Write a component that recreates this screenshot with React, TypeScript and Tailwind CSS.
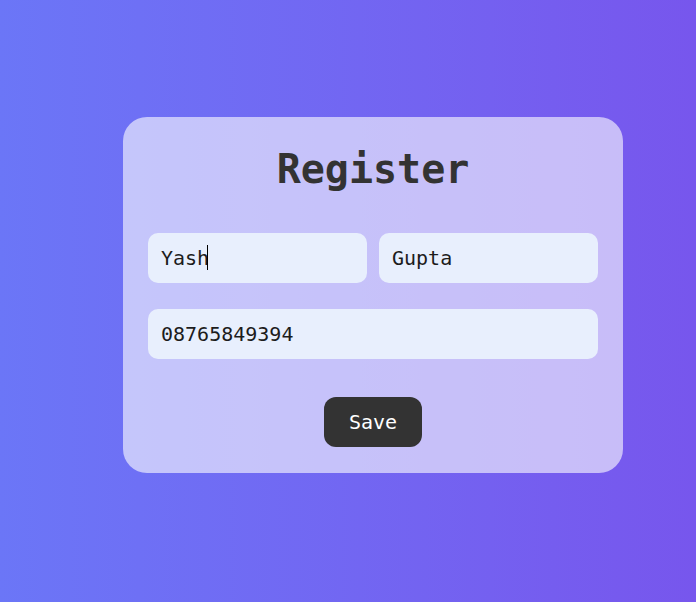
import React from "react";

const mono = { fontFamily: '"DejaVu Sans Mono", "Liberation Mono", monospace' };

export default function App() {
  return (
    <div
      className="w-full min-h-[602px] bg-gradient-to-r from-[#6b76f7] to-[#7756ed] pl-[123px] pt-[117px]"
      style={mono}
    >
      <div className="w-[500px] rounded-[24px] bg-white/60 px-[25px] pt-[25px] pb-[26px] flex flex-col">
        <h1 className="text-center text-[40px] leading-[55px] font-bold text-[#333333]">Register</h1>
        <div className="mt-[36px] grid grid-cols-2 gap-[12px]">
          <div className="relative">
            <input
              readOnly
              value="Yash"
              className="w-full h-[50px] rounded-[10px] bg-[#e8effd] px-[13px] text-[20px] text-[#1c1c1c] outline-none caret-transparent"
              style={mono}
            />
            <span className="absolute left-[59px] top-[12px] h-[25px] w-px bg-black" />
          </div>
          <input
            readOnly
            value="Gupta"
            className="w-full h-[50px] rounded-[10px] bg-[#e8effd] px-[13px] text-[20px] text-[#1c1c1c] outline-none"
            style={mono}
          />
        </div>
        <input
          readOnly
          value="08765849394"
          className="mt-[26px] w-full h-[50px] rounded-[10px] bg-[#e8effd] px-[13px] text-[20px] text-[#1c1c1c] outline-none"
          style={mono}
        />
        <div className="mt-[38px] flex justify-center">
          <button
            className="h-[50px] w-[98px] rounded-[12px] bg-[#333333] text-[20px] text-white"
            style={mono}
          >
            Save
          </button>
        </div>
      </div>
    </div>
  );
}
